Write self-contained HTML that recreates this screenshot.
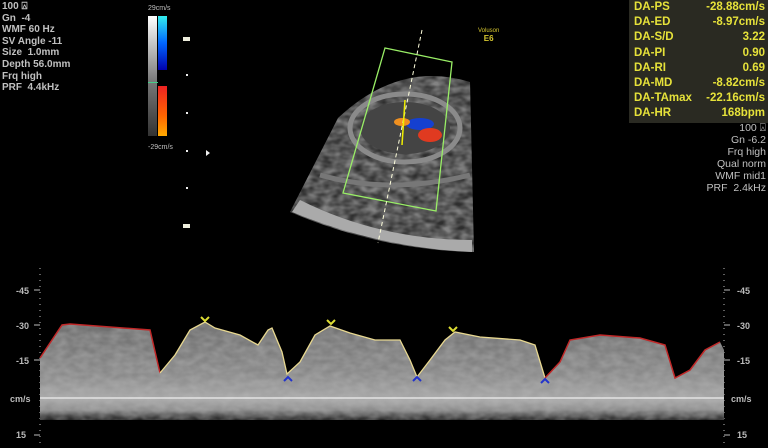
<!DOCTYPE html>
<html><head><style>
body{margin:0;width:768px;height:448px;background:#000;overflow:hidden;font-family:"Liberation Sans",sans-serif;position:relative}
.t{position:absolute;color:#c0c0c0;font-size:10px;line-height:11.6px;font-weight:bold}
.da{position:absolute;left:629px;top:0;width:139px;height:123px;background:#2a2a22;color:#e6e23a;font-size:11.5px;line-height:15.2px;font-weight:bold}
.da div{display:flex;justify-content:space-between;padding:0 3px 0 5px}
</style></head><body>
<div class="t" style="left:2px;top:1px">100 ⍓<br>Gn &nbsp;-4<br>WMF 60 Hz<br>SV Angle -11<br>Size &nbsp;1.0mm<br>Depth 56.0mm<br>Frq high<br>PRF &nbsp;4.4kHz</div>
<div class="da"><div><span>DA-PS</span><span>-28.88cm/s</span></div><div><span>DA-ED</span><span>-8.97cm/s</span></div><div><span>DA-S/D</span><span>3.22</span></div><div><span>DA-PI</span><span>0.90</span></div><div><span>DA-RI</span><span>0.69</span></div><div><span>DA-MD</span><span>-8.82cm/s</span></div><div><span>DA-TAmax</span><span>-22.16cm/s</span></div><div><span>DA-HR</span><span>168bpm</span></div></div>
<div class="t" style="right:2px;top:122px;text-align:right;font-weight:normal;font-size:10.5px;line-height:12px">100 ⍓<br>Gn -6.2<br>Frq high<br>Qual norm<br>WMF mid1<br>PRF &nbsp;2.4kHz</div>
<div class="t" style="left:148px;top:3px;font-size:7px;font-weight:normal">29cm/s</div>
<div class="t" style="left:148px;top:142px;font-size:7px;font-weight:normal">-29cm/s</div>
<div style="position:absolute;left:148px;top:16px;width:9px;height:120px;background:linear-gradient(#fff,#777 55%,#333)"></div>
<div style="position:absolute;left:158px;top:16px;width:9px;height:54px;background:linear-gradient(#3ee,#06f 50%,#00a)"></div>
<div style="position:absolute;left:158px;top:86px;width:9px;height:50px;background:linear-gradient(#e22,#f60 60%,#fa0)"></div>
<div style="position:absolute;left:148px;top:82px;width:10px;height:1px;background:#4c8"></div>
<div style="position:absolute;left:478px;top:27px;color:#d8c830;font-size:6px;line-height:8px;text-align:center">Voluson<br><b style="font-size:8px">E6</b></div>
<svg width="768" height="448" style="position:absolute;left:0;top:0">
<defs>
<filter id="n" x="0" y="0" width="1" height="1"><feTurbulence type="fractalNoise" baseFrequency="0.09 0.15" numOctaves="2" seed="3"/><feColorMatrix values="0 0 0 0 0.5 0 0 0 0 0.5 0 0 0 0 0.5 0 0 0 -1.6 1.3"/><feComposite in2="SourceGraphic" operator="in"/></filter>
<clipPath id="env"><path d="M40,358 L62,325 L70,324 L150,330 L160,373 L175,355 L190,330 L205,322 L215,328 L240,335 L258,345 L268,330 L272,328 L282,352 L287,374 L300,362 L315,335 L330,326 L350,333 L375,340 L400,340 L410,360 L417,377 L430,360 L445,340 L455,332 L480,337 L520,340 L535,345 L545,378 L560,362 L570,340 L600,335 L640,338 L665,345 L675,378 L690,370 L705,350 L720,342 L724,350 L724,420 L40,420Z"/></clipPath>
<linearGradient id="s" x1="0" y1="0" x2="0" y2="1"><stop offset="0" stop-color="#6a6a6a"/><stop offset="0.55" stop-color="#8a8a8a"/><stop offset="0.8" stop-color="#a8a8a8"/><stop offset="0.9" stop-color="#8a8a8a"/><stop offset="1" stop-color="#1a1a1a"/></linearGradient></defs>
<g fill="#eee"><rect x="183" y="37" width="7" height="4" fill="#eed"/><rect x="186" y="74" width="2" height="2"/><rect x="186" y="112" width="2" height="2"/><rect x="186" y="150" width="2" height="2"/><rect x="186" y="187" width="2" height="2"/><rect x="183" y="224" width="7" height="4" fill="#eed"/><path d="M206 150l4 3-4 3z"/></g>
<path d="M338 118 Q400 60 470 82 L474 252 Q380 250 290 212 Z" fill="#2e2e2e"/>
<path d="M338 118 Q400 60 470 82 L474 252 Q380 250 290 212 Z" fill="#666" filter="url(#n)" opacity="0.6"/>
<path d="M300 200 Q380 240 472 240 L472 252 Q380 248 292 212Z" fill="#aaa"/>
<ellipse cx="405" cy="128" rx="55" ry="34" fill="none" stroke="#8a8a8a" stroke-width="5"/>
<ellipse cx="405" cy="128" rx="45" ry="26" fill="#444"/>
<path d="M320 175 Q390 195 470 175" stroke="#777" stroke-width="5" fill="none"/>
<ellipse cx="420" cy="124" rx="14" ry="6" fill="#1540d0"/><ellipse cx="430" cy="135" rx="12" ry="7" fill="#e03a20"/><ellipse cx="402" cy="122" rx="8" ry="4" fill="#f09020"/>
<polygon points="385,48 452,62 436,211 343,193" fill="none" stroke="#9e6" stroke-width="1.3"/>
<line x1="422" y1="30" x2="378" y2="243" stroke="#ffd" stroke-dasharray="4,3"/>
<line x1="405" y1="100" x2="402" y2="145" stroke="#ee0" stroke-width="1.5"/>
<g fill="#bbb" font-size="9" font-weight="bold"><text x="16" y="294">-45</text><text x="16" y="329">-30</text><text x="16" y="364">-15</text><text x="10" y="402">cm/s</text><text x="16" y="438">15</text>
<text x="737" y="294">-45</text><text x="737" y="329">-30</text><text x="737" y="364">-15</text><text x="731" y="402">cm/s</text><text x="737" y="438">15</text></g>
<g stroke="#bbb"><line x1="34" y1="290" x2="40" y2="290"/><line x1="34" y1="325" x2="40" y2="325"/><line x1="34" y1="360" x2="40" y2="360"/><line x1="34" y1="435" x2="40" y2="435"/><line x1="40" y1="268" x2="40" y2="448" stroke-dasharray="1,5"/>
<line x1="724" y1="290" x2="730" y2="290"/><line x1="724" y1="325" x2="730" y2="325"/><line x1="724" y1="360" x2="730" y2="360"/><line x1="724" y1="435" x2="730" y2="435"/><line x1="724" y1="268" x2="724" y2="448" stroke-dasharray="1,5"/></g>
<g clip-path="url(#env)">
<rect x="40" y="320" width="684" height="100" fill="url(#s)"/>
<rect x="40" y="320" width="684" height="100" fill="#000" filter="url(#n)" opacity="0.4"/>
</g>
<line x1="40" y1="398" x2="724" y2="398" stroke="#eee" stroke-width="1.2"/>
<polyline points="40,358 62,325 70,324 150,330 160,373" fill="none" stroke="#c02828" stroke-width="1.5"/>
<polyline points="160,373 175,355 190,330 205,322 215,328 240,335 258,345 268,330 272,328 282,352 287,374 300,362 315,335 330,326 350,333 375,340 400,340 410,360 417,377 430,360 445,340 455,332 480,337 520,340 535,345 545,378" fill="none" stroke="#e8d890" stroke-width="1.3"/>
<polyline points="545,378 560,362 570,340 600,335 640,338 665,345 675,378 690,370 705,350 720,342" fill="none" stroke="#c02828" stroke-width="1.5"/>
<g fill="none" stroke-width="2"><path d="M201,317l4,4 4-4M327,320l4,4 4-4M449,327l4,4 4-4" stroke="#dd3"/><path d="M284,381l4-4 4,4M413,381l4-4 4,4M541,383l4-4 4,4" stroke="#23c"/></g>
</svg>
</body></html>
